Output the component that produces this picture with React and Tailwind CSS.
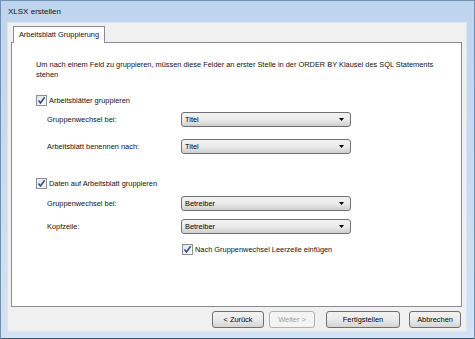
import React from "react";

const font = { fontFamily: '"Liberation Sans", Arial, sans-serif' };

function Check() {
  return (
    <span className="flex h-[11px] w-[11px] shrink-0 items-center justify-center border border-[#8e8f8f] bg-gradient-to-br from-[#dcdcdc] to-[#ffffff]">
      <span className="flex h-[9px] w-[9px] items-center justify-center bg-gradient-to-br from-[#e2e6ec] to-[#f8f9fb]">
        <svg width="9" height="9" viewBox="0 0 9 9">
          <path d="M1.5 4.6 L3.5 7 L7.6 1.3" fill="none" stroke="#2d4a8a" strokeWidth="1.5" />
        </svg>
      </span>
    </span>
  );
}

function CheckRow({ label, className = "" }) {
  return (
    <div className={"flex h-[11px] items-center gap-[2px] " + className}>
      <Check />
      <span className="whitespace-nowrap text-[7.4px] leading-[10px] text-[#111]">{label}</span>
    </div>
  );
}

function Select({ value }) {
  return (
    <div className="flex h-[15px] w-[170px] items-center justify-between rounded-[3px] border border-[#707070] bg-gradient-to-b from-[#f2f2f2] via-[#ebebeb] to-[#cfcfcf] pl-[3px] pr-[6px]">
      <span className="text-[7.4px] leading-[10px] text-black">{value}</span>
      <svg width="5" height="3" viewBox="0 0 5 3">
        <path d="M0 0 H5 L2.5 3 Z" fill="#000" />
      </svg>
    </div>
  );
}

function Row({ label, value, className = "" }) {
  return (
    <div className={"flex h-[15px] items-center " + className}>
      <span className="w-[145px] whitespace-nowrap pl-[11px] text-[7.4px] leading-[10px] text-[#111]">{label}</span>
      <Select value={value} />
    </div>
  );
}

function Button({ children, disabled, w }) {
  return (
    <div
      className={
        "flex h-[17px] items-center justify-center rounded-[3px] border text-[7.4px] leading-[10px] " +
        w +
        (disabled
          ? " border-[#adb2b5] bg-[#f4f4f4] text-[#9a9a9a]"
          : " border-[#707070] bg-gradient-to-b from-[#f2f2f2] via-[#ebebeb] to-[#d4d4d4] text-black")
      }
    >
      {children}
    </div>
  );
}

export default function App() {
  return (
    <div
      style={font}
      className="flex h-[339px] w-[475px] flex-col overflow-hidden border-l border-r border-t border-[#6f8fb4] bg-gradient-to-b from-[#bfd4ee] to-[#d3e2f4]"
    >
      <div className="flex h-[21px] shrink-0 items-center pl-[7px]">
        <span className="text-[8px] text-[#111]">XLSX erstellen</span>
      </div>
      <div className="flex flex-1 px-[6px] pb-[5px]">
        <div className="flex h-[310px] w-[460px] flex-col border border-[#dbe6f3] bg-[#f0f0f0]">
          <div className="relative z-10 -mb-px ml-[5px] mt-[3px] flex h-[17px] w-[92px] items-center justify-center border-l border-r border-t border-[#898c95] bg-white">
            <span className="whitespace-nowrap text-[7.4px] leading-[10px] text-[#111]">Arbeitsblatt Gruppierung</span>
          </div>
          <div className="ml-[3px] flex h-[265px] w-[451px] flex-col border border-[#898c95] bg-white pl-[24px]">
            <p className="mt-[17px] whitespace-nowrap text-[7.4px] leading-[10px] text-[#111]">
              Um nach einem Feld zu gruppieren, müssen diese Felder an erster Stelle in der ORDER BY Klausel des SQL Statements
              <br />
              stehen
            </p>
            <CheckRow label="Arbeitsblätter gruppieren" className="mt-[15px]" />
            <Row label="Gruppenwechsel bei:" value="Titel" className="mt-[6px]" />
            <Row label="Arbeitsblatt benennen nach:" value="Titel" className="mt-[12px]" />
            <CheckRow label="Daten auf Arbeitsblatt gruppieren" className="mt-[24px]" />
            <Row label="Gruppenwechsel bei:" value="Betreiber" className="mt-[7px]" />
            <Row label="Kopfzeile:" value="Betreiber" className="mt-[8px]" />
            <CheckRow label="Nach Gruppenwechsel Leerzeile einfügen" className="ml-[146px] mt-[10px]" />
          </div>
          <div className="mt-[4px] flex h-[17px] items-center pl-[204px]">
            <Button w="w-[52px]">&lt; Zurück</Button>
            <Button w="ml-[5px] w-[46px]" disabled>
              Weiter &gt;
            </Button>
            <Button w="ml-[11px] w-[74px]">Fertigstellen</Button>
            <Button w="ml-[9px] w-[52px]">Abbrechen</Button>
          </div>
        </div>
      </div>
      <div className="h-[1px] shrink-0 bg-[#2a5b70]" />
    </div>
  );
}
